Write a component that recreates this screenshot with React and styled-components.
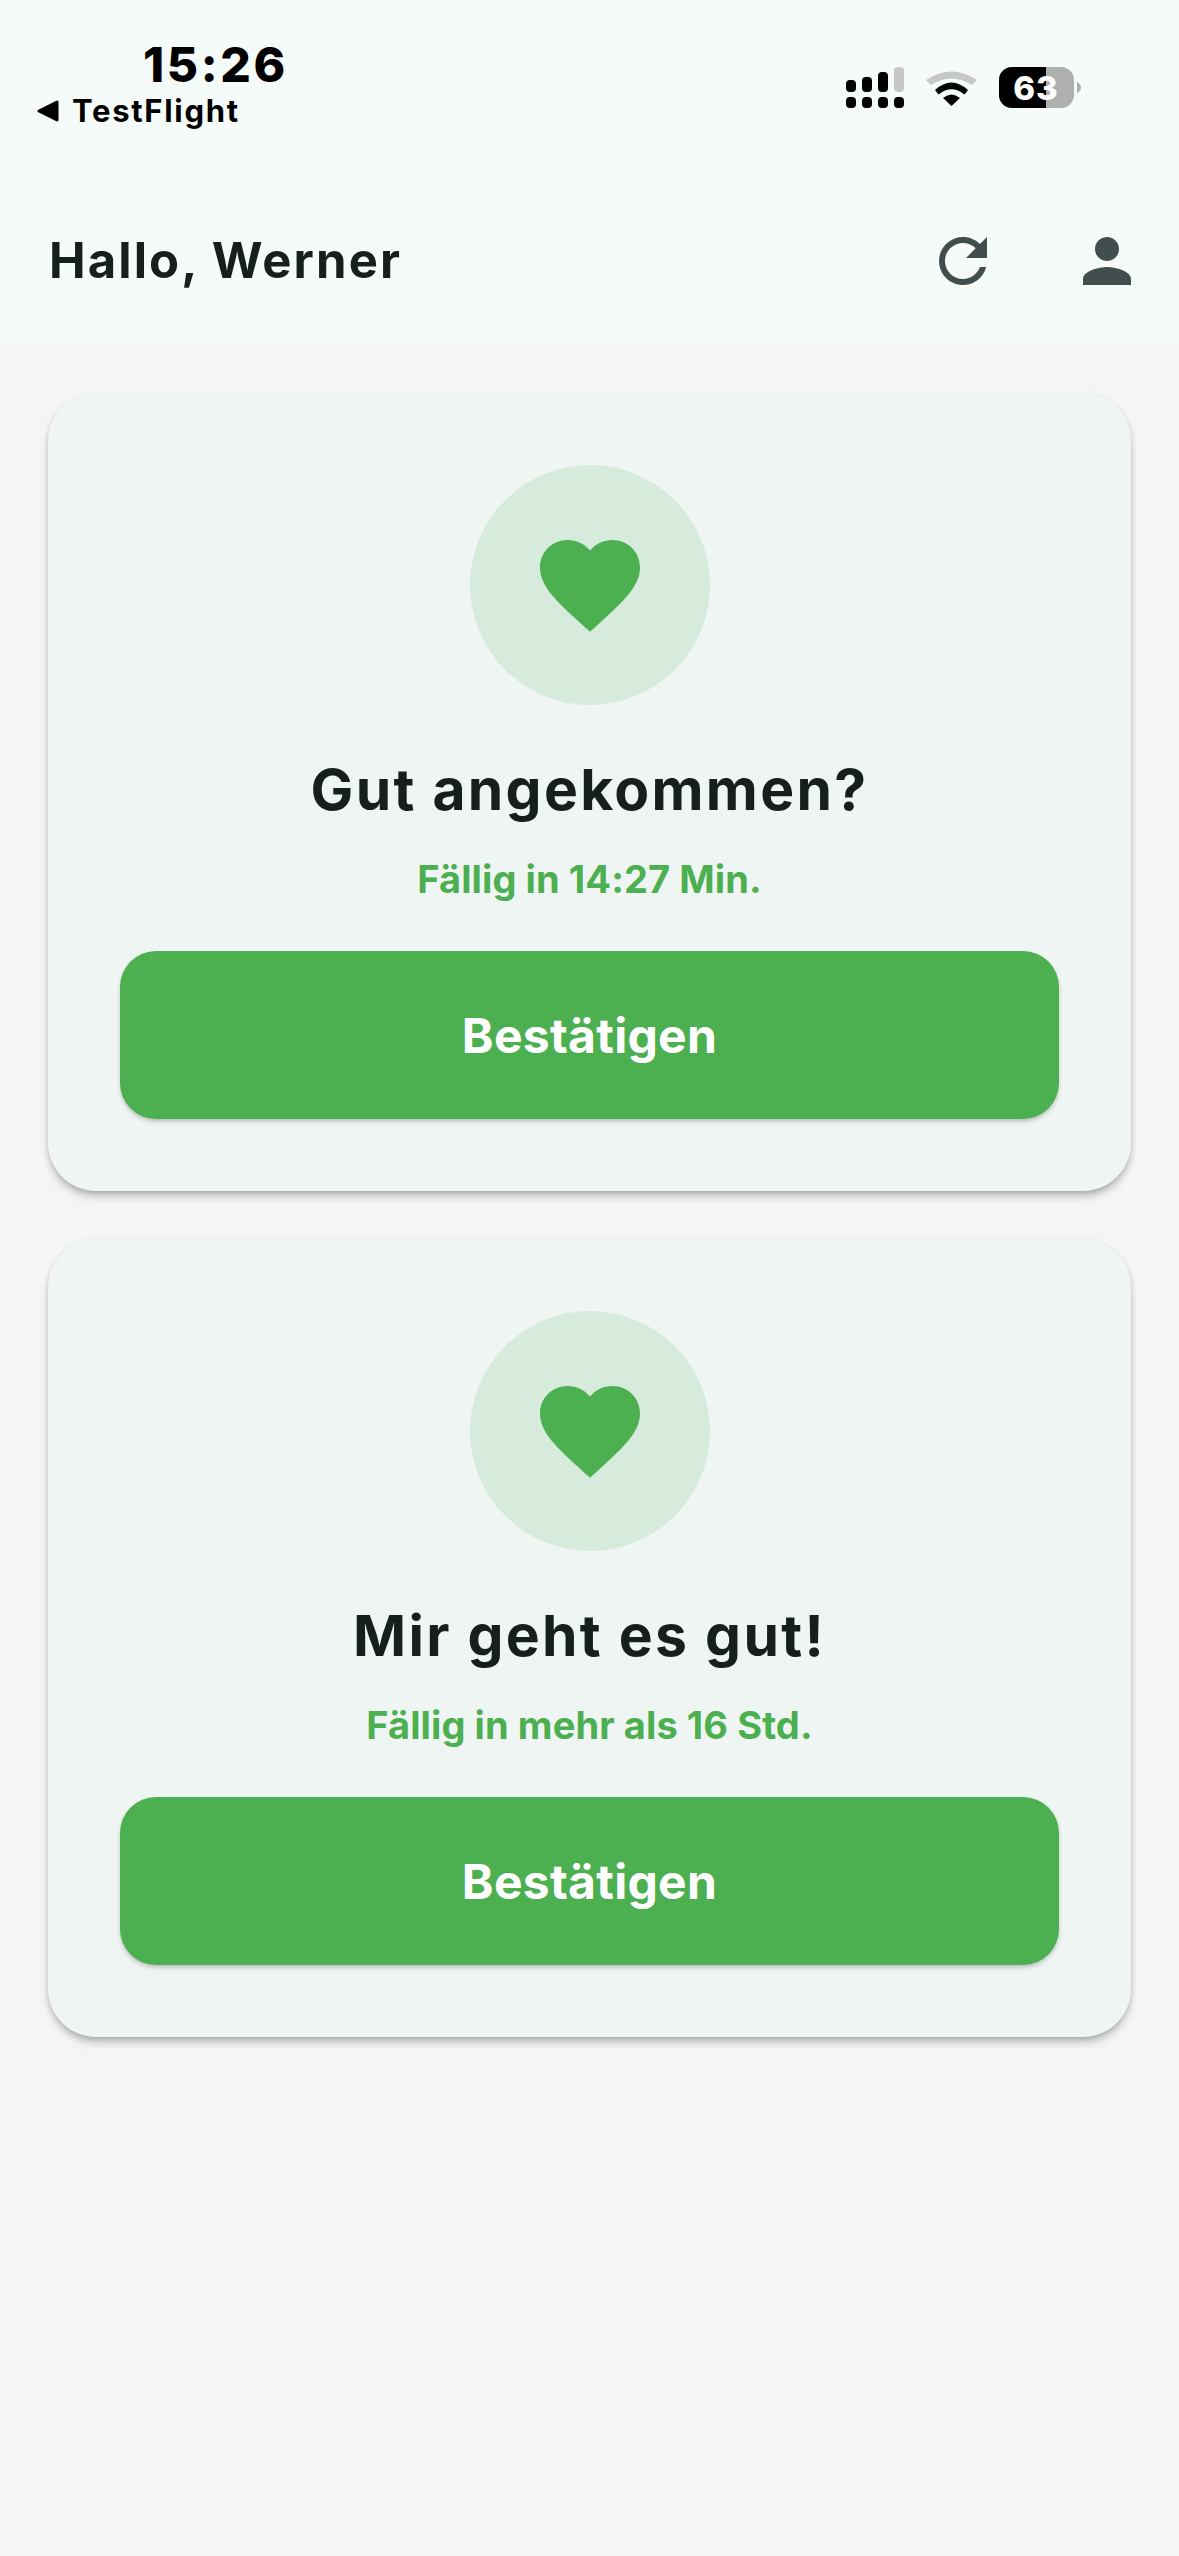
import styled, { createGlobalStyle } from 'styled-components';

const GlobalStyle = createGlobalStyle`
  html, body {
    margin: 0;
    padding: 0;
    background: #f5f5f5;
  }

  * {
    box-sizing: border-box;
  }
`;

const cards = [
  { id: 'arrival', title: 'Gut angekommen?', due: 'Fällig in 14:27 Min.' },
  { id: 'wellbeing', title: 'Mir geht es gut!', due: 'Fällig in mehr als 16 Std.' }
];

const BackArrow = () => (
  <svg width='22' height='22' viewBox='0 0 22 22'>
    <path d='M2 11L20 2V20Z' fill='#000' stroke='#000' strokeWidth='3' strokeLinejoin='round' />
  </svg>
);

const SignalIcon = () => (
  <svg width='58' height='41' viewBox='0 0 58 41'>
    <rect x='0' y='13' width='10' height='12' rx='4' fill='#000' />
    <rect x='16' y='10' width='10' height='15' rx='4' fill='#000' />
    <rect x='32' y='5' width='10' height='20' rx='4' fill='#000' />
    <rect x='48' y='0' width='10' height='25' rx='4' fill='#c5c8c6' />
    <rect x='0' y='30' width='10' height='11' rx='4' fill='#000' />
    <rect x='16' y='30' width='10' height='11' rx='4' fill='#000' />
    <rect x='32' y='30' width='10' height='11' rx='4' fill='#000' />
    <rect x='48' y='30' width='10' height='11' rx='4' fill='#000' />
  </svg>
);

const WifiIcon = () => (
  <svg width='51' height='37' viewBox='0 0 51 37'>
    <path d='M0 11Q25.5-6 51 11L46 16Q25.5 3 5 16Z' fill='#c5c8c6' />
    <path d='M9 21Q25.5 6 42 21L38.5 25.5Q25.5 15 12.5 25.5Z' fill='#000' />
    <path d='M17 29Q25.5 22 34 29L25.5 37Z' fill='#000' />
  </svg>
);

const BatteryIcon = () => (
  <svg width='82' height='41' viewBox='0 0 82 41'>
    <rect x='0' y='0' width='75' height='41' rx='13' fill='#adb0ae' />
    <path d='M13 0H47V41H13A13 13 0 0 1 0 28V13A13 13 0 0 1 13 0Z' fill='#000' />
    <path d='M78 15Q82 17 82 20.500Q82 24 78 26Z' fill='#adb0ae' />
    <text
      x='37'
      y='32.500'
      textAnchor='middle'
      fontFamily='Inter, sans-serif'
      fontWeight='800'
      fontSize='33'
      letterSpacing='1'
      fill='#fff'
    >
      63
    </text>
  </svg>
);

const RefreshIcon = () => (
  <svg width='72' height='72' viewBox='0 0 24 24' fill='#424e4d'>
    <path d='M17.65 6.35C16.2 4.9 14.21 4 12 4c-4.42 0-7.99 3.58-7.99 8s3.57 8 7.99 8c3.73 0 6.84-2.55 7.73-6h-2.08c-.82 2.33-3.04 4-5.65 4-3.31 0-6-2.69-6-6s2.69-6 6-6c1.66 0 3.14.69 4.22 1.78L13 11h7V4l-2.35 2.35z' />
  </svg>
);

const PersonIcon = () => (
  <svg width='72' height='72' viewBox='0 0 24 24' fill='#424e4d'>
    <path d='M12 12c2.21 0 4-1.79 4-4s-1.79-4-4-4-4 1.79-4 4 1.79 4 4 4zm0 2c-2.67 0-8 1.34-8 4v2h16v-2c0-2.66-5.33-4-8-4z' />
  </svg>
);

const HeartIcon = () => (
  <svg width='120' height='120' viewBox='0 0 24 24' fill='#4caf50'>
    <path d='M12 21.35l-1.45-1.32C5.4 15.36 2 12.28 2 8.5 2 5.42 4.42 3 7.5 3c1.74 0 3.41.81 4.5 2.09C13.09 3.81 14.76 3 16.5 3 19.58 3 22 5.42 22 8.5c0 3.78-3.4 6.86-8.55 11.54L12 21.35z' />
  </svg>
);

const TaskCard = ({ title, due }) => (
  <Card>
    <IconCircle>
      <HeartIcon />
    </IconCircle>
    <CardTitle>{title}</CardTitle>
    <DueText>{due}</DueText>
    <ConfirmButton type='button'>Bestätigen</ConfirmButton>
  </Card>
);

const App = () => (
  <>
    <GlobalStyle />
    <Page>
      <Header>
        <StatusBar>
          <StatusLeft>
            <Time>15:26</Time>
            <BackLink>
              <BackArrow />
              TestFlight
            </BackLink>
          </StatusLeft>
          <StatusRight>
            <SignalIcon />
            <WifiIcon />
            <BatteryIcon />
          </StatusRight>
        </StatusBar>
        <Toolbar>
          <Greeting>Hallo, Werner</Greeting>
          <ToolbarActions>
            <IconButton type='button' aria-label='Aktualisieren'>
              <RefreshIcon />
            </IconButton>
            <IconButton type='button' aria-label='Profil'>
              <PersonIcon />
            </IconButton>
          </ToolbarActions>
        </Toolbar>
      </Header>
      <CardList>
        {cards.map((card) => (
          <TaskCard key={card.id} title={card.title} due={card.due} />
        ))}
      </CardList>
    </Page>
  </>
);

const Page = styled.div`
  min-height: 2556px;
  background: #f5f5f5;
  font-family: Inter, 'Liberation Sans', sans-serif;
`;

const Header = styled.header`
  height: 345px;
  background: #f5fbf9;
`;

const StatusBar = styled.div`
  display: flex;
  justify-content: space-between;
  align-items: flex-start;
  height: 177px;
  padding-right: 98px;
`;

const StatusLeft = styled.div`
  display: flex;
  flex-direction: column;
  padding: 40px 0 0 37px;
`;

const Time = styled.div`
  margin-left: 106px;
  font-size: 48px;
  font-weight: 800;
  line-height: 50px;
  letter-spacing: 2.6px;
  color: #000;
`;

const BackLink = styled.div`
  display: flex;
  align-items: center;
  gap: 13px;
  margin-top: 2px;
  font-size: 31px;
  font-weight: 700;
  line-height: 38px;
  letter-spacing: 1.7px;
  color: #000;
`;

const StatusRight = styled.div`
  display: flex;
  align-items: flex-start;
  gap: 22px;
  padding-top: 67px;

  svg:nth-child(2) {
    margin-top: 2px;
  }
`;

const Toolbar = styled.div`
  display: flex;
  justify-content: space-between;
  align-items: center;
  height: 168px;
  padding: 0 36px 0 49px;
`;

const Greeting = styled.h1`
  margin: 0;
  font-size: 49px;
  font-weight: 700;
  line-height: 60px;
  letter-spacing: 2.1px;
  color: #171e1e;
`;

const ToolbarActions = styled.div`
  display: flex;
  gap: 72px;
`;

const IconButton = styled.button`
  display: flex;
  width: 72px;
  height: 72px;
  padding: 0;
  border: 0;
  background: none;
`;

const CardList = styled.main`
  display: flex;
  flex-direction: column;
  gap: 48px;
  padding: 48px;
`;

const Card = styled.section`
  display: flex;
  flex-direction: column;
  align-items: center;
  height: 798px;
  padding: 72px;
  border-radius: 48px;
  background: #eff5f3;
  box-shadow: 0 6px 10px -2px rgba(0, 0, 0, 0.3), 0 1px 5px rgba(0, 0, 0, 0.08);
`;

const IconCircle = styled.div`
  display: flex;
  justify-content: center;
  align-items: center;
  width: 240px;
  height: 240px;
  border-radius: 50%;
  background: #d6ebdc;
`;

const CardTitle = styled.h2`
  margin: 51px 0 0;
  font-size: 57px;
  font-weight: 700;
  line-height: 68px;
  letter-spacing: 2.3px;
  color: #171e1e;
`;

const DueText = styled.p`
  margin: 32px 0 0;
  font-size: 38px;
  font-weight: 700;
  line-height: 46px;
  letter-spacing: 0.1px;
  color: #4caf50;
`;

const ConfirmButton = styled.button`
  width: 100%;
  height: 168px;
  margin-top: auto;
  border: 0;
  border-radius: 36px;
  background: #4caf50;
  box-shadow: 0 3px 5px -1px rgba(0, 0, 0, 0.25);
  font-family: inherit;
  font-size: 48px;
  font-weight: 700;
  letter-spacing: 0.3px;
  color: #fff;
`;

export default App;
